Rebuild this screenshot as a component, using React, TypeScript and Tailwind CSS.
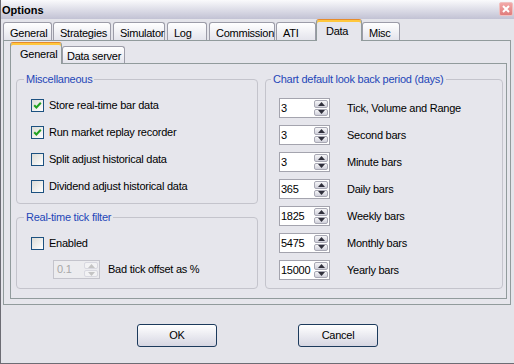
import React from 'react'

// XP (silver) style "Options" dialog, Data > General page.

const outerTabs = [
  { label: 'General', cls: 'w-[49px]' },
  { label: 'Strategies', cls: 'ml-[1px] w-[58px]' },
  { label: 'Simulator', cls: 'ml-[2px] w-[52px]' },
  { label: 'Log', cls: 'ml-[2px] w-[40px]' },
  { label: 'Commission', cls: 'ml-[2px] w-[66px]' },
  { label: 'ATI', cls: 'ml-[1px] w-[40px]' },
  { label: 'Data', cls: 'w-[46px]', selected: true },
  { label: 'Misc', cls: 'w-[38px]' },
]

const lookBack = [
  { value: '3', label: 'Tick, Volume and Range' },
  { value: '3', label: 'Second bars' },
  { value: '3', label: 'Minute bars' },
  { value: '365', label: 'Daily bars' },
  { value: '1825', label: 'Weekly bars' },
  { value: '5475', label: 'Monthly bars' },
  { value: '15000', label: 'Yearly bars' },
]

function Tab({ label, cls, selected }: { label: string; cls: string; selected?: boolean }) {
  if (selected) {
    return (
      <div
        className={`${cls} relative z-10 h-[22px] -mb-px rounded-t-[3px] border border-b-0 border-[#919b9c] border-t-[#e68b2c] bg-[#e6e6ec] pl-[9px] pt-[3px] shadow-[inset_0_2px_0_#ffc73c]`}
      >
        {label}
      </div>
    )
  }
  return (
    <div
      className={`${cls} h-[18px] rounded-t-[3px] border border-b-0 border-[#9c9ca8] bg-gradient-to-b from-white to-[#e4e4ec] pl-[6px] pt-[2px]`}
    >
      {label}
    </div>
  )
}

function Checkbox({ checked }: { checked?: boolean }) {
  return (
    <div className="flex h-[13px] w-[13px] shrink-0 items-center justify-center border border-[#1c5180] bg-gradient-to-br from-[#dcdcd7] to-white">
      {checked && (
        <svg width="9" height="9" viewBox="0 0 9 9">
          <path d="M1.2 4.2 L3.4 6.5 L7.8 1.8" fill="none" stroke="#21a121" strokeWidth="2" />
        </svg>
      )}
    </div>
  )
}

function Arrow({ up, color }: { up?: boolean; color: string }) {
  return (
    <svg width="7" height="4" viewBox="0 0 7 4">
      <path d={up ? 'M0 4 L3.5 0 L7 4 Z' : 'M0 0 L3.5 4 L7 0 Z'} fill={color} />
    </svg>
  )
}

function Spinner({ value, disabled }: { value: string; disabled?: boolean }) {
  const half = disabled
    ? 'flex flex-1 items-center justify-center rounded-[2px] border border-[#d8d8e0] bg-[#f2f2f4]'
    : 'flex flex-1 items-center justify-center rounded-[2px] border border-[#a8a8b4] bg-gradient-to-b from-[#f6f6f8] to-[#d0d0da]'
  return (
    <div
      className={
        disabled
          ? 'flex h-[19px] w-[47px] items-center border border-[#c4c4cc] bg-[#ececef]'
          : 'flex h-[20px] w-[51px] items-center border border-[#a4a4ae] bg-white'
      }
    >
      <div className={disabled ? 'flex-1 pl-[3px] text-[#a8a8a8]' : 'flex-1 pl-[1px]'}>{value}</div>
      <div className="mr-px flex h-full w-[14px] flex-col gap-px py-px">
        <div className={half}>
          <Arrow up color={disabled ? '#c4c4c4' : '#30303c'} />
        </div>
        <div className={half}>
          <Arrow color={disabled ? '#c4c4c4' : '#30303c'} />
        </div>
      </div>
    </div>
  )
}

function Group({ title, cls, children }: { title: string; cls: string; children: React.ReactNode }) {
  return (
    <fieldset className={`${cls} rounded-[4px] border border-[#c4c4cc]`}>
      <legend className="ml-[7px] px-[2px] leading-[13px] text-[#1f46b8]">{title}</legend>
      {children}
    </fieldset>
  )
}

function CheckRow({ label, checked }: { label: string; checked?: boolean }) {
  return (
    <div className="flex h-[13px] items-center gap-[5px]">
      <Checkbox checked={checked} />
      <span className="leading-[13px]">{label}</span>
    </div>
  )
}

export default function App() {
  return (
    <div className="flex h-[364px] w-[514px] flex-col border-b border-l border-[#6c6c74] bg-[#e4e4ea] font-['Liberation_Sans',Arial,sans-serif] text-[11px] tracking-[-0.25px] text-black">
      {/* title bar */}
      <div className="flex h-[19px] shrink-0 items-center justify-between bg-gradient-to-b from-[#fafafc] to-[#c2c2d4] pl-px pt-[2px]">
        <span className="text-[11px] font-bold tracking-normal">Options</span>
        <div className="mb-[3px] mr-px flex h-[14px] w-[14px] items-center justify-center rounded-[2px] border border-[#f0c0c0] bg-gradient-to-b from-[#f2a8a8] to-[#e07c7c]">
          <svg width="8" height="8" viewBox="0 0 8 8">
            <path d="M1 1 L7 7 M7 1 L1 7" stroke="white" strokeWidth="2" />
          </svg>
        </div>
      </div>

      {/* outer tabs */}
      <div className="flex h-[21px] shrink-0 items-end pl-[2px]">
        {outerTabs.map((t) => (
          <Tab key={t.label} label={t.label} cls={t.cls} selected={t.selected} />
        ))}
      </div>

      <div className="ml-[2px] flex h-[265px] w-[508px] shrink-0 flex-col border border-[#919b9c] bg-[#e6e6ec] pl-[6px] pr-[3px] pt-[2px]">
        {/* inner tabs */}
        <div className="flex h-[20px] shrink-0 items-end">
          <Tab label="General" cls="w-[52px]" selected />
          <div className="h-[17px] w-[63px] rounded-t-[3px] border border-b-0 border-[#9c9ca8] bg-gradient-to-b from-white to-[#e4e4ec] pl-[4px] pt-[1px]">
            Data server
          </div>
        </div>

        <div className="flex h-[236px] gap-[7px] border border-[#919b9c] bg-[#e6e6ec] pl-[5px] pt-[9px]">
          <div className="flex w-[242px] flex-col gap-[7px]">
            <Group title="Miscellaneous" cls="h-[131px]">
              <div className="flex flex-col gap-[14px] pl-[14px] pt-[13px]">
                <CheckRow label="Store real-time bar data" checked />
                <CheckRow label="Run market replay recorder" checked />
                <CheckRow label="Split adjust historical data" />
                <CheckRow label="Dividend adjust historical data" />
              </div>
            </Group>
            <Group title="Real-time tick filter" cls="h-[78px]">
              <div className="flex flex-col pl-[14px] pt-[13px]">
                <CheckRow label="Enabled" />
                <div className="ml-[22px] mt-[10px] flex items-center gap-[8px]">
                  <Spinner value="0.1" disabled />
                  <span>Bad tick offset as %</span>
                </div>
              </div>
            </Group>
          </div>

          <fieldset className="h-[216px] w-[238px] rounded-[4px] border border-[#c4c4cc]">
            <legend className="ml-[5px] px-[2px] leading-[13px] text-[#1f46b8]">
              Chart default look back period (days)
            </legend>
            <div className="flex flex-col gap-[7px] pl-[13px] pt-[12px]">
              {lookBack.map((r) => (
                <div key={r.label} className="flex h-[20px] items-center gap-[17px]">
                  <Spinner value={r.value} />
                  <span>{r.label}</span>
                </div>
              ))}
            </div>
          </fieldset>
        </div>
      </div>

      {/* buttons */}
      <div className="flex flex-1 justify-center gap-[81px] pt-[19px]">
        <button className="h-[23px] w-[80px] rounded-[3px] border border-[#1c3a5c] bg-gradient-to-b from-white to-[#d6d6e2] text-[11px]">
          OK
        </button>
        <button className="h-[23px] w-[80px] rounded-[3px] border border-[#1c3a5c] bg-gradient-to-b from-white to-[#d6d6e2] text-[11px]">
          Cancel
        </button>
      </div>
    </div>
  )
}
